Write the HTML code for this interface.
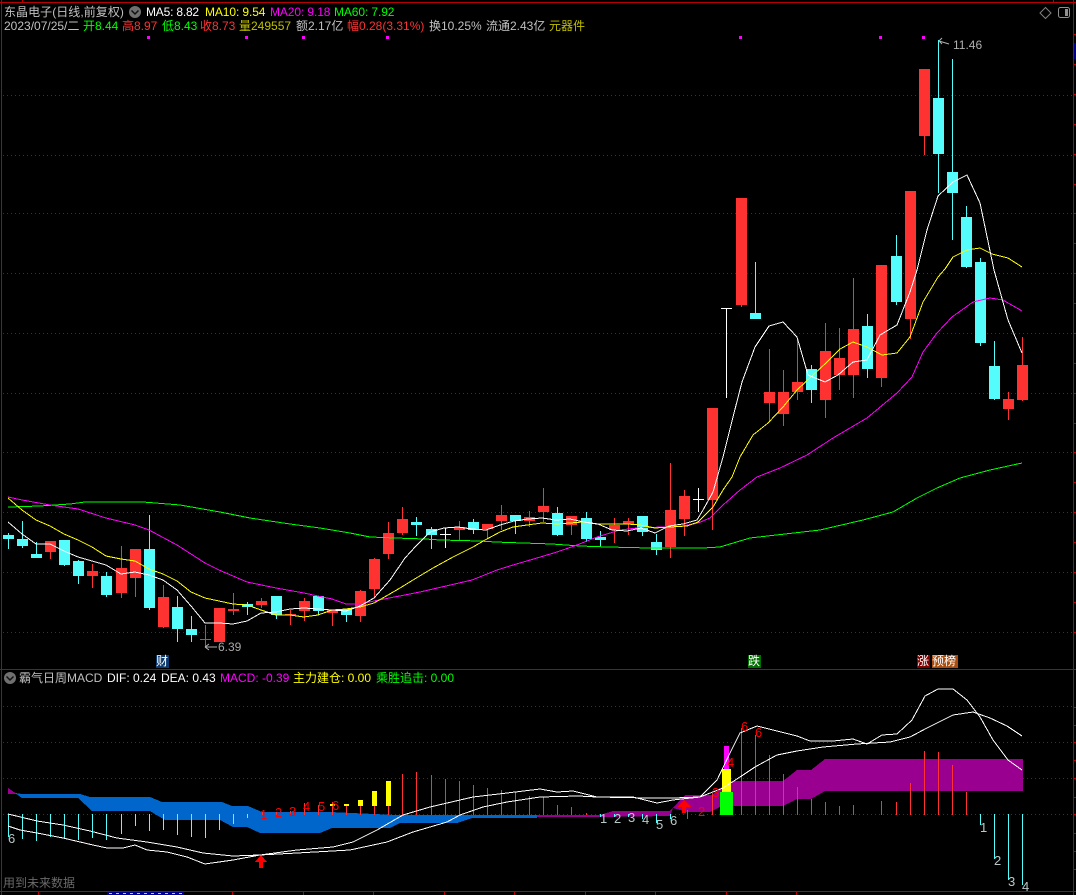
<!DOCTYPE html>
<html><head><meta charset="utf-8">
<style>
html,body{margin:0;padding:0;background:#000;width:1076px;height:895px;overflow:hidden}
#w{position:relative;width:1076px;height:895px;background:#000;overflow:hidden;font-family:"Liberation Sans","Noto Sans CJK SC",sans-serif;font-size:12px}
#w span{position:absolute;white-space:nowrap;line-height:14px;height:14px}
svg{position:absolute;left:0;top:0}
.g{color:#c0c0c0}.w{color:#fff}.y{color:#ff0}.m{color:#f0f}.l{color:#0f0}.r{color:#ff3232}.gr{color:#0f0}.o{color:#c0c000}
.d{font-size:13px;color:#f00}.c{font-size:13px;color:#b8c8c8}
</style></head><body><div id="w">
<svg width="1076" height="895" viewBox="0 0 1076 895" shape-rendering="crispEdges" fill="none">
<!-- dotted grid -->
<path stroke="#b00000" stroke-dasharray="1 3" d="M3 95.5H1072M3 155.5H1072M3 213.5H1072M3 273.5H1072M3 333.5H1072M3 393.5H1072M3 452.5H1072M3 512.5H1072M3 572.5H1072M3 632.5H1072M3 706.5H1072M3 742.5H1072M3 778.5H1072M3 814.5H1072"/>
<!-- frame -->
<path stroke="#b80000" d="M0 2.5H1076M0 669.5H1076M0 891.5H1076M1.5 0V895M1073.5 0V895M22.5 0V2M1053.5 0V2M38.5 892V895M232.5 892V895M303.5 892V895M373.5 892V895M444.5 892V895M514.5 892V895M585.5 892V895M655.5 892V895M726.5 892V895M796.5 892V895M1074 34.5H1076M1074 64.5H1076M1074 94.5H1076M1074 124.5H1076M1074 154.5H1076M1074 184.5H1076M1074 213.5H1076M1074 243.5H1076M1074 273.5H1076M1074 303.5H1076M1074 333.5H1076M1074 363.5H1076M1074 393.5H1076M1074 423.5H1076M1074 452.5H1076M1074 482.5H1076M1074 512.5H1076M1074 542.5H1076M1074 572.5H1076M1074 602.5H1076M1074 632.5H1076M1074 707.5H1076M1074 725.5H1076M1074 742.5H1076M1074 760.5H1076M1074 778.5H1076M1074 797.5H1076M1074 814.5H1076M1074 833.5H1076M1074 851.5H1076M1074 869.5H1076"/>
<rect x="1074" y="43" width="2" height="16" fill="#000080"/>
<rect x="107" y="892" width="77" height="3" fill="#000090"/>
<path stroke="#c8c8c8" stroke-dasharray="3 4" d="M109 893.5H182"/>
<!-- top-right icons -->
<path stroke="#808080" shape-rendering="auto" d="M1045.5 7.5L1051 13L1045.5 18.5L1040 13Z"/>
<rect x="1058.5" y="7.5" width="11" height="10" rx="2" stroke="#909090" shape-rendering="auto"/>
<rect x="1065" y="9" width="3" height="7" fill="#909090"/>
<!-- magenta markers -->
<path fill="#f0f" d="M147 36h3v3h-3zM245 36h3v3h-3zM302 36h3v3h-3zM386 36h3v3h-3zM739 36h3v3h-3zM879 36h3v3h-3zM922 36h3v3h-3z"/>
<!-- wicks -->
<path stroke="#ff3232" d="M50.5 541V559M92.5 564V588M121.5 546V598M135.5 549V597M163.5 585V628M205.5 625V647M200 639.5H211M233.5 593V615M261.5 598V608M290.5 610V625M285 614.5H296M304.5 598V621M332.5 610V626M360.5 590V622M374.5 558V598M388.5 522V559M402.5 507V535M459.5 521V540M487.5 524V539M501.5 505V530M529.5 511V527M543.5 488V522M571.5 516V535M614.5 518V543M628.5 518V535M670.5 463V558M684.5 490V536M712.5 408V530M741.5 198V307M769.5 349V422M783.5 370V426M797.5 338V400M825.5 323V418M839.5 328V390M853.5 278V398M881.5 265V387M910.5 191V339M924.5 69V155M1008.5 392V420M1022.5 337V401"/>
<path stroke="#54fcfc" d="M8.5 533V549M22.5 521V548M36.5 542V558M64.5 540V566M78.5 560V584M106.5 572V597M149.5 515V610M177.5 596V642M191.5 616V642M247.5 602V615M276.5 596V619M318.5 596V615M346.5 609V622M416.5 517V536M431.5 527V549M473.5 519V534M515.5 515V534M557.5 507V536M586.5 512V542M600.5 531V546M642.5 516V536M656.5 534V555M755.5 262V319M811.5 365V403M867.5 314V378M896.5 235V305M938.5 40V193M952.5 59V240M966.5 206V268M980.5 258V346M994.5 341V400"/>
<path stroke="#fff" d="M445.5 528V548M440 534.5H451M698.5 488V512M693 499.5H704M726.5 308V398M721 308.5H732"/>
<!-- bodies -->
<path fill="#ff3232" d="M45 541h11v11h-11zM87 571h11v5h-11zM116 568h11v25h-11zM130 549h11v29h-11zM158 597h11v30h-11zM214 608h11v34h-11zM228 609h11v2h-11zM256 601h11v4h-11zM299 601h11v10h-11zM327 610h11v3h-11zM355 591h11v25h-11zM369 559h11v30h-11zM383 533h11v21h-11zM397 519h11v14h-11zM454 527h11v3h-11zM482 524h11v5h-11zM496 515h11v6h-11zM524 517h11v4h-11zM538 506h11v6h-11zM566 516h11v9h-11zM609 525h11v5h-11zM623 521h11v3h-11zM665 510h11v37h-11zM679 496h11v23h-11zM707 408h11v92h-11zM736 198h11v107h-11zM764 392h11v11h-11zM778 392h11v22h-11zM792 382h11v10h-11zM820 351h11v49h-11zM834 358h11v17h-11zM848 329h11v46h-11zM876 265h11v113h-11zM905 191h11v128h-11zM919 69h11v67h-11zM1003 399h11v10h-11zM1017 365h11v35h-11z"/>
<path fill="#54fcfc" d="M3 535h11v4h-11zM17 539h11v7h-11zM31 554h11v4h-11zM59 540h11v25h-11zM73 561h11v15h-11zM101 576h11v19h-11zM144 549h11v59h-11zM172 607h11v22h-11zM186 629h11v6h-11zM242 604h11v3h-11zM271 596h11v19h-11zM313 596h11v15h-11zM341 609h11v6h-11zM411 522h11v3h-11zM426 529h11v6h-11zM468 522h11v8h-11zM510 515h11v6h-11zM552 513h11v22h-11zM581 518h11v21h-11zM595 537h11v3h-11zM637 516h11v16h-11zM651 542h11v8h-11zM750 313h11v6h-11zM806 369h11v21h-11zM862 326h11v43h-11zM891 256h11v46h-11zM933 98h11v56h-11zM947 172h11v21h-11zM961 217h11v50h-11zM975 262h11v81h-11zM989 366h11v33h-11z"/>
<!-- MA lines -->
<polyline stroke="#00ff00" points="8,507 40,506 70,504 85,502 143,502 180,505 220,512 250,518 290,524 320,528 350,533 370,537 395,538 425,539 440,540 480,541 495,542 523,543 552,544 580,546 608,547 650,548 703,548 720,547 750,538 785,534 820,530 863,520 893,512 917,498 937,488 960,478 990,470 1022,463"/>
<polyline stroke="#ff00ff" points="8,497 22,500 50,505 78,509 106,518 135,525 149,530 177,545 205,563 219,570 247,582 276,588 304,593 332,599 346,604 360,604 374,601 420,592 472,580 497,570 513,565 537,558 557,552 577,545 597,537 620,530 637,528 663,527 683,526 698,523 710,518 723,505 740,490 757,477 780,468 807,455 833,438 867,418 897,393 912,377 923,352 937,333 952,317 973,302 990,298 1003,300 1022,311"/>
<polyline stroke="#ffff00" points="8,498 22,510 36,520 50,526 64,534 78,540 92,547 106,556 121,559 135,561 149,569 163,574 177,581 191,592 205,598 219,601 233,604 247,605 261,610 276,615 290,615 304,617 318,615 332,610 346,609 360,607 374,603 388,595 400,588 413,580 433,568 453,557 473,547 485,540 500,532 513,527 527,525 542,523 557,524 570,523 583,522 597,524 613,524 627,524 640,525 655,528 670,527 687,526 698,522 713,507 723,490 732,477 740,457 753,435 768,423 783,407 797,390 813,375 827,362 840,349 853,342 867,347 882,355 897,353 910,337 923,302 938,277 945,269 953,257 967,250 980,248 992,254 1008,258 1022,267"/>
<polyline stroke="#ffffff" points="8,522 22,534 36,544 50,544 64,551 78,557 92,561 106,565 121,574 135,572 149,575 163,580 177,590 191,606 205,623 219,623 233,624 247,621 261,613 276,612 290,609 304,608 318,609 332,610 346,611 360,606 374,598 390,580 405,558 416,546 430,532 444,528 458,527 472,529 486,530 500,525 514,521 528,519 542,518 556,520 570,519 584,522 598,524 612,530 627,531 641,528 655,533 669,526 683,524 697,520 703,510 713,492 723,457 733,417 742,382 755,347 769,326 783,322 797,337 808,375 825,382 838,375 853,362 867,360 880,335 897,325 910,292 917,270 927,230 938,196 953,182 967,175 980,203 994,270 1008,320 1022,353"/>
<!-- hi/lo arrows -->
<path stroke="#b0b0b0" shape-rendering="auto" d="M205 647H217M205 647L209 644M205 647L209 650M939 41L949 44M939 41L942 38M939 41L942 44"/>
<!-- MACD band -->
<polygon fill="#990090" points="8,788 17,794 8,794"/>
<polygon fill="#0066cc" points="15,793 22,794 80,794 90,797 150,797 162,802 222,802 232,806 248,806 262,812 330,812 396,815 537,815 537,818 472,818 457,823 400,823 390,828 332,828 320,833 260,833 247,827 233,827 220,820 165,820 150,811 92,811 78,798 22,798"/>
<polygon fill="#990090" points="537,815 600,815 603,814 613,811 670,811 685,795 712,795 722,787 733,781 783,781 797,770 811,770 825,759 1023,759 1023,791 825,791 811,799 797,799 783,806 733,806 720,807 710,812 687,812 673,808 670,816 600,817 537,817"/>
<!-- histogram -->
<path stroke="#54fcfc" d="M8.5 814V837M22.5 814V839M36.5 814V841M50.5 814V837M64.5 814V839M78.5 814V840M92.5 814V838M106.5 814V840M121.5 814V834M135.5 814V826M149.5 814V831M163.5 814V830M177.5 814V835M191.5 814V837M205.5 814V838M219.5 814V830M233.5 814V824M247.5 814V818M600.5 814V817M614.5 814V817M628.5 814V817M642.5 814V819M656.5 814V823M670.5 814V819M980.5 814V825M994.5 814V859M1008.5 814V880M1022.5 814V885"/>
<path stroke="#ff3232" d="M262.5 812V815M276.5 812V815M290.5 811V815M304.5 803V815M318.5 805V815M332.5 802V815M346.5 804V815M360.5 800V815M374.5 791V815M388.5 781V815M402.5 774V815M416.5 772V815M431.5 775V815M445.5 779V815M459.5 781V815M473.5 785V815M487.5 788V815M501.5 790V815M515.5 792V815M529.5 796V815M543.5 797V815M557.5 805V815M571.5 807V815M586.5 813V815M687.5 810V819M712.5 793V815M741.5 728V815M755.5 735V815M769.5 755V815M783.5 774V815M797.5 787V815M811.5 799V815M825.5 802V815M839.5 806V815M853.5 805V815M881.5 801V815M896.5 802V815M910.5 783V815M924.5 751V815M938.5 752V815M952.5 765V815M966.5 792V815"/>
<path fill="#ff0" d="M330 804h5v2h-5zM344 804h5v2h-5zM358 800h5v6h-5zM372 791h5v15h-5zM386 781h5v25h-5z"/>
<rect x="720" y="792" width="13" height="23" fill="#0f0"/>
<rect x="722" y="769" width="9" height="23" fill="#ff0"/>
<rect x="724" y="746" width="5" height="23" fill="#f0f"/>
<!-- MACD lines -->
<polyline stroke="#fff" points="8,826 20,830 37,833 63,838 93,845 107,848 123,848 135,845 147,850 167,852 187,857 205,864 233,860 260,855 297,853 350,850 387,842 413,832 447,822 460,815 483,807 507,802 540,797 578,796 597,797 647,798 673,798 700,797 723,788 740,777 755,767 777,755 797,751 823,747 857,744 890,742 910,737 927,728 953,715 973,712 990,718 1007,726 1022,736"/>
<polyline stroke="#fff" points="8,814 37,821 63,825 90,831 117,838 147,842 177,847 203,853 233,856 260,855 297,850 333,847 353,842 377,830 403,815 430,807 460,800 473,797 507,793 540,789 557,792 573,791 597,797 633,797 657,803 673,800 700,797 717,780 730,753 740,733 757,726 773,730 797,736 810,741 833,741 853,739 867,744 882,735 897,734 912,720 925,696 938,689 953,689 967,700 980,717 993,740 1008,760 1022,770"/>
<!-- red arrows -->
<path fill="#f00" d="M261 855L267 862H263V868H259V862H255Z"/>
<path fill="#f00" d="M684 800L691 807H686V813H682V807H677Z"/>
</svg>

<span class="g" style="left:4px;top:5px;letter-spacing:.05px">东晶电子(日线,前复权)</span>
<svg width="14" height="14" style="left:128px;top:5px"><circle cx="7" cy="7" r="6" fill="#707070"/><path d="M3.5 5.5L7 9L10.5 5.5" stroke="#111" stroke-width="1.5" fill="none"/></svg>
<span class="w" style="left:146px;top:5px;letter-spacing:-.2px">MA5: 8.82</span>
<span class="y" style="left:205px;top:5px;letter-spacing:-.1px">MA10: 9.54</span>
<span class="m" style="left:270px;top:5px;letter-spacing:-.1px">MA20: 9.18</span>
<span class="l" style="left:334px;top:5px;letter-spacing:-.1px">MA60: 7.92</span>

<span class="g" style="left:4px;top:19px">2023/07/25/二</span>
<span class="gr" style="left:83px;top:19px">开8.44</span>
<span class="r" style="left:122px;top:19px">高8.97</span>
<span class="gr" style="left:162px;top:19px">低8.43</span>
<span class="r" style="left:200px;top:19px">收8.73</span>
<span class="o" style="left:239px;top:19px">量249557</span>
<span class="g" style="left:296px;top:19px">额2.17亿</span>
<span class="r" style="left:347px;top:19px">幅0.28(3.31%)</span>
<span class="g" style="left:429px;top:19px">换10.25%</span>
<span class="g" style="left:486px;top:19px">流通2.43亿</span>
<span class="o" style="left:549px;top:19px">元器件</span>

<span style="left:953px;top:38px;color:#b0b0b0">11.46</span>
<span style="left:218px;top:640px;color:#a8a8a8">6.39</span>

<span style="left:156px;top:655px;width:13px;height:13px;line-height:13px;background:#0d3a6e;color:#fff">财</span>
<span style="left:748px;top:655px;width:13px;height:13px;line-height:13px;background:#007000;color:#fff">跌</span>
<span style="left:917px;top:655px;width:13px;height:13px;line-height:13px;background:#800000;color:#fff">涨</span>
<span style="left:932px;top:655px;width:26px;height:13px;line-height:13px;background:#a84c10;color:#fff">预榜</span>

<svg width="14" height="14" style="left:3px;top:671px"><circle cx="7" cy="7" r="6" fill="#707070"/><path d="M3.5 5.5L7 9L10.5 5.5" stroke="#111" stroke-width="1.5" fill="none"/></svg>
<span class="g" style="left:19px;top:671px">霸气日周MACD</span>
<span class="w" style="left:107px;top:671px">DIF: 0.24</span>
<span class="w" style="left:161px;top:671px">DEA: 0.43</span>
<span class="m" style="left:220px;top:671px">MACD: -0.39</span>
<span class="y" style="left:293px;top:671px">主力建仓: 0.00</span>
<span class="gr" style="left:376px;top:671px">乘胜追击: 0.00</span>

<span class="c" style="left:8px;top:832px">6</span>
<span class="d" style="left:260px;top:808px">1</span>
<span class="d" style="left:275px;top:806px">2</span>
<span class="d" style="left:289px;top:805px">3</span>
<span class="d" style="left:303px;top:800px">4</span>
<span class="d" style="left:318px;top:800px">5</span>
<span class="d" style="left:332px;top:799px">6</span>
<span class="c" style="left:600px;top:812px">1</span>
<span class="c" style="left:614px;top:812px">2</span>
<span class="c" style="left:628px;top:811px">3</span>
<span class="c" style="left:642px;top:813px">4</span>
<span class="c" style="left:656px;top:818px">5</span>
<span class="c" style="left:670px;top:814px">6</span>
<span class="d" style="left:698px;top:805px">2</span>
<span class="d" style="left:712px;top:786px">3</span>
<span class="d" style="left:727px;top:756px">4</span>
<span class="d" style="left:741px;top:720px">6</span>
<span class="d" style="left:755px;top:726px">6</span>
<span class="c" style="left:980px;top:821px">1</span>
<span class="c" style="left:994px;top:854px">2</span>
<span class="c" style="left:1008px;top:875px">3</span>
<span class="c" style="left:1022px;top:880px">4</span>
<span style="left:3px;top:876px;color:#6a6a6a">用到未来数据</span>
</div></body></html>
